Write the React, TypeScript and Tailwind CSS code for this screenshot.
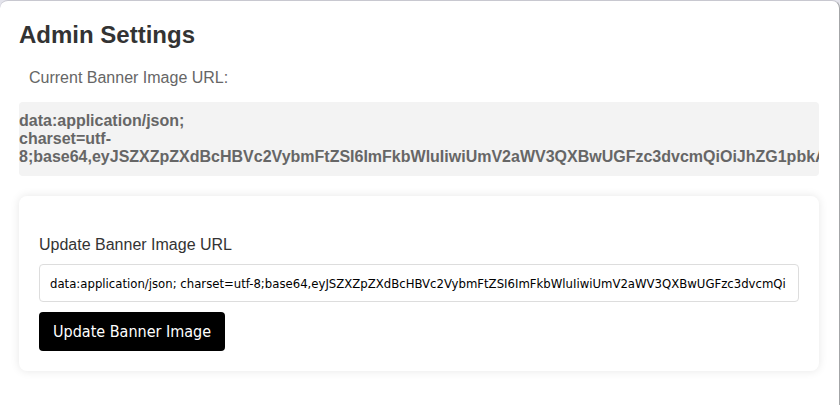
import { useState } from "react";

const PAYLOAD =
  "8;base64,eyJSZXZpZXdBcHBVc2VybmFtZSI6ImFkbWluIiwiUmV2aWV3QXBwUGFzc3dvcmQiOiJhZG1pbkA";

export default function App() {
  const [url, setUrl] = useState(
    "data:application/json; charset=utf-8;base64,eyJSZXZpZXdBcHBVc2VybmFtZSI6ImFkbWluIiwiUmV2aWV3QXBwUGFzc3dvcmQi",
  );

  return (
    <div className="min-h-screen bg-[#e4e4ec] font-['Liberation_Sans',Arial,sans-serif]">
      <main className="min-h-screen rounded-t-lg border-t border-r border-t-[#c8c8d0] border-r-[#a3a5a7] bg-white pt-5 pr-5 pl-[19px]">
        <h1 className="text-2xl leading-7 font-bold text-[#333333]">Admin Settings</h1>
        <p className="mt-5 px-2.5 text-base leading-[18px] text-[#666666]">
          Current Banner Image URL:
        </p>
        <p className="mt-[15px] overflow-hidden rounded-[4px] bg-[#f3f3f3] py-2.5 text-base leading-[18px] font-bold whitespace-nowrap text-[#666666]">
          data:application/json;
          <br />
          charset=utf-
          <br />
          {PAYLOAD}
        </p>
        <form
          className="mt-5 rounded-lg bg-white px-5 pt-10 pb-5 shadow-[0_0_10px_rgba(0,0,0,0.1)]"
          onSubmit={(event) => event.preventDefault()}
        >
          <label
            htmlFor="banner-url"
            className="block text-base leading-[18px] text-[#333333]"
          >
            Update Banner Image URL
          </label>
          <input
            id="banner-url"
            type="text"
            value={url}
            onChange={(event) => setUrl(event.target.value)}
            className="mt-2.5 block h-[38px] w-full rounded-[4px] border border-[#dddddd] px-2.5 font-['DejaVu_Sans_Condensed',Tahoma,sans-serif] text-[13px] text-black"
          />
          <button
            type="submit"
            className="mt-2.5 block h-[39px] rounded-[4px] bg-black px-3.5 font-['DejaVu_Sans_Condensed',Tahoma,sans-serif] text-base text-white"
          >
            Update Banner Image
          </button>
        </form>
      </main>
    </div>
  );
}
